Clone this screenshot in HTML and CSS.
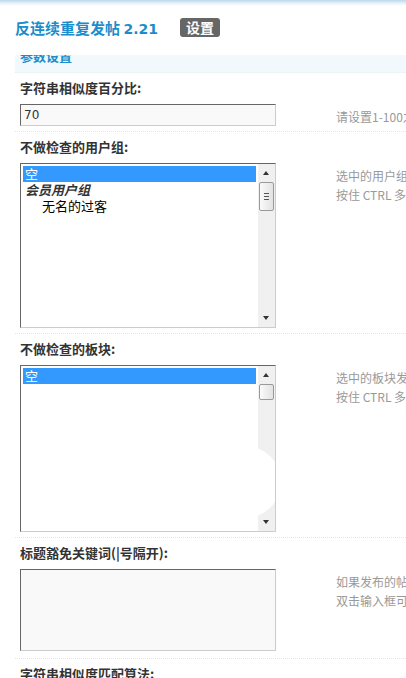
FILE: index.html
```html
<!DOCTYPE html>
<html lang="zh-CN">
<head>
    <meta charset="UTF-8">
    <meta name="viewport" content="width=device-width, initial-scale=1.0">
    <title>反连续重复发帖 2.21</title>
    <link rel="stylesheet" href="styles.css">
</head>
<body>
    <div class="topbar">
        <h3 class="title">反连续重复发帖 <span class="ver">2.21</span></h3>
        <span class="badge">设置</span>
    </div>

    <div class="main">
        <div class="partition"><span>参数设置</span></div>

        <!-- 相似度 -->
        <div class="label first">字符串相似度百分比:</div>
        <div class="row">
            <div class="field"><input class="txt" type="text" value="70"></div>
            <div class="tip">请设置1-100之间的整数</div>
        </div>

        <!-- 用户组 -->
        <div class="label">不做检查的用户组:</div>
        <div class="row">
            <div class="field">
                <div class="listbox">
                    <div class="options">
                        <div class="opt sel">空</div>
                        <div class="opt group">会员用户组</div>
                        <div class="opt sub">无名的过客</div>
                    </div>
                    <div class="scrollbar">
                        <div class="arrow up"></div>
                        <div class="thumb"></div>
                        <div class="track"></div>
                        <div class="arrow down"></div>
                    </div>
                </div>
            </div>
            <div class="tip">选中的用户组发帖不做检查<br>按住 CTRL 多选</div>
        </div>

        <!-- 板块 -->
        <div class="label">不做检查的板块:</div>
        <div class="row">
            <div class="field">
                <div class="listbox tall">
                    <div class="options">
                        <div class="opt sel">空</div>
                    </div>
                    <div class="scrollbar">
                        <div class="arrow up"></div>
                        <div class="thumb small"></div>
                        <div class="track"></div>
                        <div class="arrow down"></div>
                    </div>
                    <div class="blob"></div>
                </div>
            </div>
            <div class="tip">选中的板块发帖不做检查<br>按住 CTRL 多选</div>
        </div>

        <!-- 关键词 -->
        <div class="label">标题豁免关键词(|号隔开):</div>
        <div class="row last">
            <div class="field"><textarea class="area"></textarea></div>
            <div class="tip">如果发布的帖子标题含有这些关键词则不做检查<br>双击输入框可扩大/缩小</div>
        </div>

        <div class="label">字符串相似度匹配算法:</div>
    </div>
</body>
</html>
```

FILE: styles.css
```css
html {
    overflow: hidden;
}
body {
    margin: 0;
    font-family: "Noto Sans CJK SC", sans-serif;
    font-size: 12px;
    color: #333;
    background: #fff;
}
.topbar {
    height: 55px;
    box-sizing: border-box;
    padding: 18px 0 0 15px;
    display: flex;
    align-items: flex-start;
    background: linear-gradient(#bcd8eb 0, #e4f0f8 3px, #fff 6px);
}
.title {
    margin: 0;
    width: 165px;
    font-size: 15px;
    line-height: 20px;
    font-weight: bold;
    color: #1c8dcb;
    white-space: nowrap;
}
.title .ver {
    font-family: "DejaVu Sans", sans-serif;
    font-size: 14px;
}
.badge {
    background: #666;
    color: #fff;
    font-weight: bold;
    font-size: 14px;
    line-height: 19px;
    padding: 0 6px;
    border-radius: 3px;
}
.main {
    padding-left: 15px;
}
.partition {
    height: 17px;
    overflow: hidden;
    background: #f2f9fd;
    border-bottom: 1px dotted #deeffb;
    padding-left: 5px;
    color: #1c8dcb;
    font-weight: bold;
    font-size: 13px;
}
.partition span {
    display: block;
    line-height: 17px;
    margin-top: -8px;
}
.label {
    border-top: 1px dotted #d6e8f5;
    padding: 6px 5px 0;
    font-weight: bold;
    font-size: 13px;
    line-height: 18px;
    color: #333;
    white-space: nowrap;
}
.label.first {
    border-top: 0;
}
.row {
    display: grid;
    grid-template-columns: 316px 1fr;
    padding: 7px 0 5px 5px;
}
.row.last {
    padding-bottom: 7px;
}
.field {
    display: flex;
}
.tip {
    color: #999;
    font-size: 12px;
    line-height: 19px;
    padding-top: 3px;
    white-space: nowrap;
    overflow: hidden;
}
.txt,
.area,
.listbox {
    width: 256px;
    box-sizing: border-box;
    border: 1px solid;
    border-color: #666 #ccc #ccc #666;
}
.txt {
    height: 22px;
    padding: 0 3px;
    background: #f9f9f9;
    font-family: "DejaVu Sans", sans-serif;
    font-size: 12px;
    color: #333;
    outline: none;
}
.area {
    height: 82px;
    background: #f9f9f9;
    resize: none;
    outline: none;
}
.listbox {
    height: 165px;
    display: flex;
    background: #fff;
    position: relative;
    overflow: hidden;
}
.listbox.tall {
    height: 167px;
}
.options {
    flex: 1;
    padding: 2px;
    font-size: 13px;
    line-height: 16px;
    color: #000;
}
.opt {
    padding-left: 2px;
    white-space: nowrap;
}
.opt.sel {
    background: #3399ff;
    color: #fff;
}
.opt.group {
    font-weight: bold;
    font-style: italic;
    color: #333;
}
.opt.sub {
    padding-left: 19px;
}
.scrollbar {
    width: 17px;
    display: flex;
    flex-direction: column;
    background: #f0f0f0;
}
.arrow {
    height: 18px;
    position: relative;
}
.arrow::after {
    content: "";
    position: absolute;
    left: 5px;
    border-left: 3.5px solid transparent;
    border-right: 3.5px solid transparent;
}
.arrow.up::after {
    top: 7px;
    border-bottom: 4px solid #333;
}
.arrow.down::after {
    bottom: 7px;
    border-top: 4px solid #333;
}
.thumb {
    height: 27px;
    margin: 0 1px;
    border: 1px solid #9a9a9a;
    border-radius: 2px;
    background:
        linear-gradient(#555, #555) center calc(50% - 3px) / 5px 1px no-repeat,
        linear-gradient(#555, #555) center 50% / 5px 1px no-repeat,
        linear-gradient(#555, #555) center calc(50% + 3px) / 5px 1px no-repeat,
        linear-gradient(90deg, #fafafa, #e2e2e2);
}
.thumb.small {
    height: 14px;
    background: linear-gradient(90deg, #fafafa, #e2e2e2);
}
.track {
    flex: 1;
}
.blob {
    position: absolute;
    left: 60px;
    top: 80px;
    width: 200px;
    height: 72px;
    background: #fff;
    border-radius: 36px;
}
```
